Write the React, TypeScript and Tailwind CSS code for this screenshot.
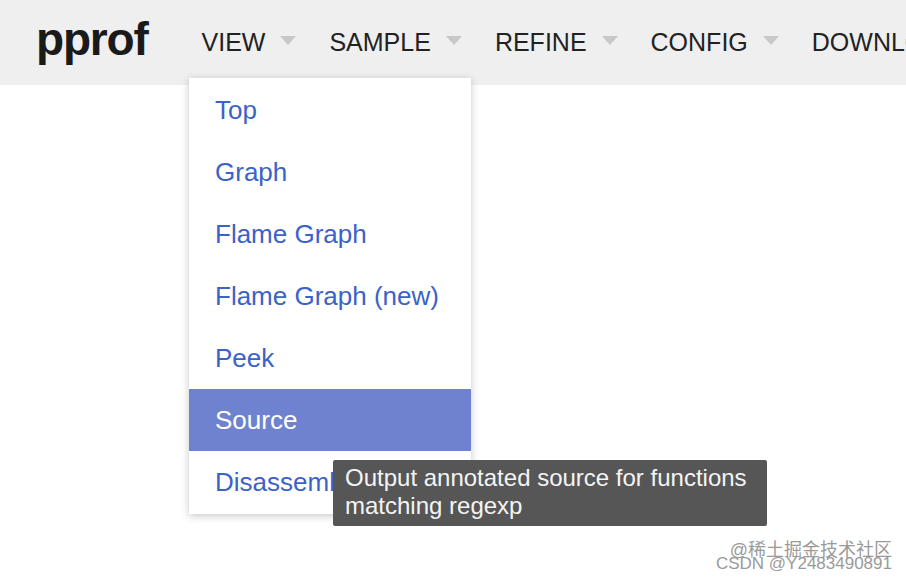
import React from "react";

const MENUS = ["VIEW", "SAMPLE", "REFINE", "CONFIG", "DOWNLOAD"];
const ITEMS = ["Top", "Graph", "Flame Graph", "Flame Graph (new)", "Peek", "Source", "Disassemble"];

function Caret() {
  return (
    <svg width="16" height="10" viewBox="0 0 16 10" className="ml-[15px] mt-[-4px]">
      <path d="M0 0 L16 0 L8 9 Z" fill="#c8c8c8" />
    </svg>
  );
}

export default function App() {
  return (
    <div
      className="relative h-[578px] w-[906px] overflow-hidden bg-white"
      style={{ fontFamily: '"Liberation Sans", Arial, sans-serif' }}
    >
      <header className="flex h-[85px] items-center whitespace-nowrap bg-[#efefef] pl-[36px]">
        <div className="mt-[-6px] text-[46px] font-bold tracking-[-1.2px] text-[#1a1a1a]">pprof</div>
        <nav className="ml-[54px] flex items-center gap-[33px]">
          {MENUS.map((m) => (
            <div key={m} className="flex items-center text-[25px] text-[#222]">
              <span>{m}</span>
              <Caret />
            </div>
          ))}
        </nav>
      </header>

      <div className="absolute left-[189px] top-[78px] w-[282px] bg-white py-px shadow-[0_2px_8px_rgba(0,0,0,0.22)]">
        {ITEMS.map((it) => (
          <div
            key={it}
            className={
              it === "Source"
                ? "flex h-[62px] items-center bg-[#6e82d0] pl-[26px] text-[26px] text-white"
                : "flex h-[62px] items-center pl-[26px] text-[26px] text-[#3b62c9]"
            }
          >
            {it}
          </div>
        ))}
      </div>

      <div className="absolute left-[333px] top-[460px] w-[434px] rounded-[2px] bg-[#565656] px-[12px] pb-[6px] pt-[4px] text-[24px] leading-[28px] text-[#f4f4f4]">
        Output annotated source for functions matching regexp
      </div>

      <div
        className="absolute right-[14px] top-[544px] text-right text-[17px] leading-[13px] text-[#9a9a9a]"
        style={{ fontFamily: '"Liberation Sans", "Noto Sans CJK SC", sans-serif' }}
      >
        <div className="text-[18px]">@稀土掘金技术社区</div>
        <div>CSDN @Y2483490891</div>
      </div>
    </div>
  );
}
